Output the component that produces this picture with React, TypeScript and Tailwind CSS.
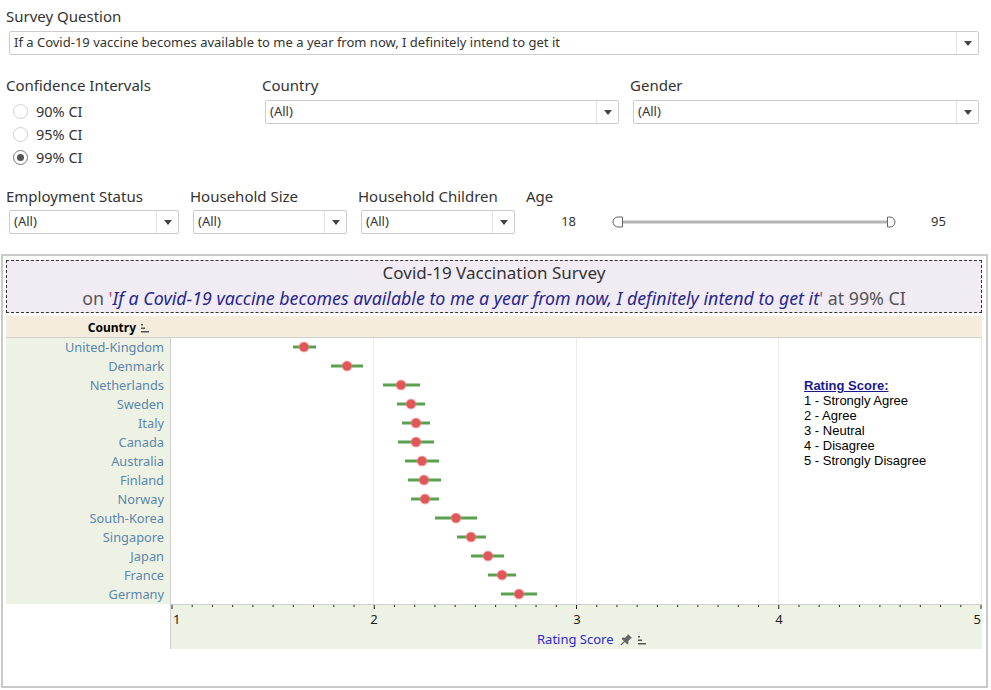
import React from "react";

const font = { fontFamily: '"Noto Sans", "Open Sans", sans-serif' };

// [country, ci low, mean, ci high] in page px
const rows: Array<[string, number, number, number]> = [
  ["United-Kingdom", 293, 304, 316],
  ["Denmark", 331, 347, 363],
  ["Netherlands", 383, 401, 420],
  ["Sweden", 397, 411, 425],
  ["Italy", 402, 416, 430],
  ["Canada", 398, 416, 434],
  ["Australia", 405, 422, 439],
  ["Finland", 408, 424, 441],
  ["Norway", 411, 425, 439],
  ["South-Korea", 435, 456, 477],
  ["Singapore", 457, 471, 486],
  ["Japan", 471, 488, 504],
  ["France", 488, 502, 516],
  ["Germany", 501, 519, 537],
];

const Dropdown = ({ text, w }: { text: string; w: string }) => {
  return (
    <div className={`${w} h-[24px] flex border border-[#cccccc] rounded-[2px] bg-white`}>
      <div className="flex-1 flex items-center pl-[4px] text-[13px] text-[#333] truncate">{text}</div>
      <div className="w-[22px] border-l border-[#e3e3e3] flex items-center justify-center">
        <svg width="8" height="5" viewBox="0 0 8 5">
          <path d="M0 0 H8 L4 5 Z" fill="#444" />
        </svg>
      </div>
    </div>
  );
};

const Radio = ({ label, on }: { label: string; on?: boolean }) => {
  return (
    <div className="h-[23px] flex items-center pl-[7px]">
      <div
        className={`w-[15px] h-[15px] rounded-full border flex items-center justify-center ${on ? "border-[#777]" : "border-[#d0d0d0]"}`}
      >
        {on && <div className="w-[7px] h-[7px] rounded-full bg-[#555]" />}
      </div>
      <span className="ml-[8px] text-[14.5px] text-[#333]">{label}</span>
    </div>
  );
};

const SortIcon = () => (
  <svg width="10" height="10" viewBox="0 0 10 10" className="ml-[4px]">
    <rect x="1" y="1" width="2" height="1.5" fill="#555" />
    <rect x="1" y="4.5" width="4" height="1.5" fill="#555" />
    <rect x="1" y="8" width="8" height="1.5" fill="#555" />
  </svg>
);

const PinIcon = () => (
  <svg width="13" height="13" viewBox="0 0 14 14">
    <path d="M8.5 1 L13 5.5 L11.5 6 L9 8.5 L9.2 11 L7.8 12.4 L5.2 9.8 L1.5 13.5 L0.5 12.5 L4.2 8.8 L1.6 6.2 L3 4.8 L5.5 5 L8 2.5 Z" fill="#666" />
  </svg>
);

const Label = ({ children }: { children: React.ReactNode }) => (
  <div className="h-[18px] flex items-center text-[15px] text-[#333]">{children}</div>
);

const Chart = () => {
  const ticks: number[] = [];
  for (let i = 0; i <= 40; i++) ticks.push(i);
  return (
    <div className="flex flex-col">
      <div className="h-[22px] w-[976px] bg-[#f4ecdc] border-b border-[#cfcfcf] flex">
        <div className="w-[164px] flex items-center justify-end pr-[20px] pt-[3px] text-[12px] font-bold text-black">
          Country
          <SortIcon />
        </div>
      </div>
      <div className="flex">
        <div className="w-[164px] bg-[#eef2e4] flex flex-col">
          {rows.map((r) => (
            <div key={r[0]} className="h-[19px] flex items-center justify-end pr-[6px] text-[12.8px] text-[#5b86ad]">
              {r[0]}
            </div>
          ))}
        </div>
        <svg width="812" height="266" className="block">
          <rect x="0" y="0" width="812" height="266" fill="#fff" />
          <line x1="0.5" y1="0" x2="0.5" y2="266" stroke="#cfcfcf" />
          <line x1="811.5" y1="0" x2="811.5" y2="266" stroke="#e6e6e6" />
          {[203, 406, 608].map((x) => (
            <line key={x} x1={x + 0.5} y1="0" x2={x + 0.5} y2="266" stroke="#ececec" />
          ))}
          {rows.map((r, i) => {
            const y = 9 + i * 19;
            return (
              <g key={r[0]}>
                <line x1={r[1] - 170} y1={y} x2={r[3] - 170} y2={y} stroke="#59a14f" strokeWidth="3" />
                <circle cx={r[2] - 170} cy={y} r="5.5" fill="#f08a8c" opacity="0.6" />
                <circle cx={r[2] - 170} cy={y} r="4.5" fill="#e15759" />
              </g>
            );
          })}
        </svg>
      </div>
      <div className="flex">
        <div className="w-[164px]" />
        <div className="w-[812px] h-[45px] bg-[#eef2e4] border-t border-l border-[#cfcfcf] flex flex-col">
          <svg width="811" height="24" className="block">
            {ticks.map((t) => {
              const x = 1 + t * 20.225;
              const major = t % 10 === 0;
              return (
                <line key={t} x1={x} y1="0" x2={x} y2={major ? 4 : 2} stroke="#222" strokeWidth="1" />
              );
            })}
            <text x="2" y="19" fontSize="13" fill="#222" style={font}>1</text>
            <text x="203" y="19" fontSize="13" fill="#222" textAnchor="middle" style={font}>2</text>
            <text x="406" y="19" fontSize="13" fill="#222" textAnchor="middle" style={font}>3</text>
            <text x="608" y="19" fontSize="13" fill="#222" textAnchor="middle" style={font}>4</text>
            <text x="810" y="19" fontSize="13" fill="#222" textAnchor="end" style={font}>5</text>
          </svg>
          <div className="flex items-center pl-[366px] h-[20px] pt-[1px] text-[13px] text-[#2a2ad4]">
            Rating Score
            <span className="ml-[6px]"><PinIcon /></span>
            <SortIcon />
          </div>
        </div>
      </div>
    </div>
  );
};

const App = () => {
  return (
    <div className="w-[991px] h-[690px] bg-white relative overflow-hidden" style={font}>
      <div className="pl-[6px] pt-[7px]">
        <Label>Survey Question</Label>
        <div className="ml-[3px] mt-[6px]">
          <Dropdown
            w="w-[970px]"
            text="If a Covid-19 vaccine becomes available to me a year from now, I definitely intend to get it"
          />
        </div>

        <div className="flex mt-[21px]">
          <div className="w-[256px]">
            <Label>Confidence Intervals</Label>
            <div className="mt-[6px]">
              <Radio label="90% CI" />
              <Radio label="95% CI" />
              <Radio label="99% CI" on />
            </div>
          </div>
          <div className="w-[368px]">
            <Label>Country</Label>
            <div className="ml-[3px] mt-[6px]">
              <Dropdown w="w-[354px]" text="(All)" />
            </div>
          </div>
          <div>
            <Label>Gender</Label>
            <div className="ml-[3px] mt-[6px]">
              <Dropdown w="w-[346px]" text="(All)" />
            </div>
          </div>
        </div>

        <div className="flex mt-[18px]">
          <div className="w-[184px]">
            <Label>Employment Status</Label>
            <div className="ml-[3px] mt-[5px]">
              <Dropdown w="w-[170px]" text="(All)" />
            </div>
          </div>
          <div className="w-[168px]">
            <Label>Household Size</Label>
            <div className="ml-[3px] mt-[5px]">
              <Dropdown w="w-[154px]" text="(All)" />
            </div>
          </div>
          <div className="w-[168px]">
            <Label>Household Children</Label>
            <div className="ml-[3px] mt-[5px]">
              <Dropdown w="w-[154px]" text="(All)" />
            </div>
          </div>
          <div>
            <Label>Age</Label>
            <div className="mt-[5px] h-[24px] flex items-center">
              <span className="w-[50px] text-right text-[13px] text-[#333]">18</span>
              <svg width="290" height="14" className="ml-[34px] block">
                <rect x="12" y="5.5" width="266" height="3" fill="#b3b3b3" />
                <path d="M12.5 2 H8 A5 5 0 0 0 8 12 H12.5 Z" fill="#fff" stroke="#666" />
                <path d="M277.5 2 H280 A5 5 0 0 1 280 12 H277.5 Z" fill="#fff" stroke="#666" />
              </svg>
              <span className="ml-[31px] text-[13px] text-[#333]">95</span>
            </div>
          </div>
        </div>
      </div>

      <div className="ml-[1px] mt-[20px] w-[987px] h-[434px] border-2 border-[#c9c9c9] pl-[3px] pt-[4px]">
        <div className="w-[976px] h-[53px] border border-dashed border-[#333] bg-[#f1ebf3] flex flex-col items-center pt-[1px]">
          <div className="text-[17px] leading-[22px] text-[#333]">Covid-19 Vaccination Survey</div>
          <div className="text-[17.8px] leading-[28px] text-[#555]">
            on <span className="text-[#c04a6a]">'</span>
            <span className="italic text-[#26268f]">If a Covid-19 vaccine becomes available to me a year from now, I definitely intend to get it</span>
            <span className="text-[#c04a6a]">'</span> at 99% CI
          </div>
        </div>
        <div className="mt-[3px] relative">
          <Chart />
          <div className="absolute left-[798px] top-[62px] text-[13px] leading-[15px] text-black" style={{ fontFamily: '"Liberation Sans", Arial, sans-serif' }}>
            <div className="font-bold underline text-[#1a1a8c]">Rating Score:</div>
            <div>1 - Strongly Agree</div>
            <div>2 - Agree</div>
            <div>3 - Neutral</div>
            <div>4 - Disagree</div>
            <div>5 - Strongly Disagree</div>
          </div>
        </div>
      </div>
    </div>
  );
};

export default App;
